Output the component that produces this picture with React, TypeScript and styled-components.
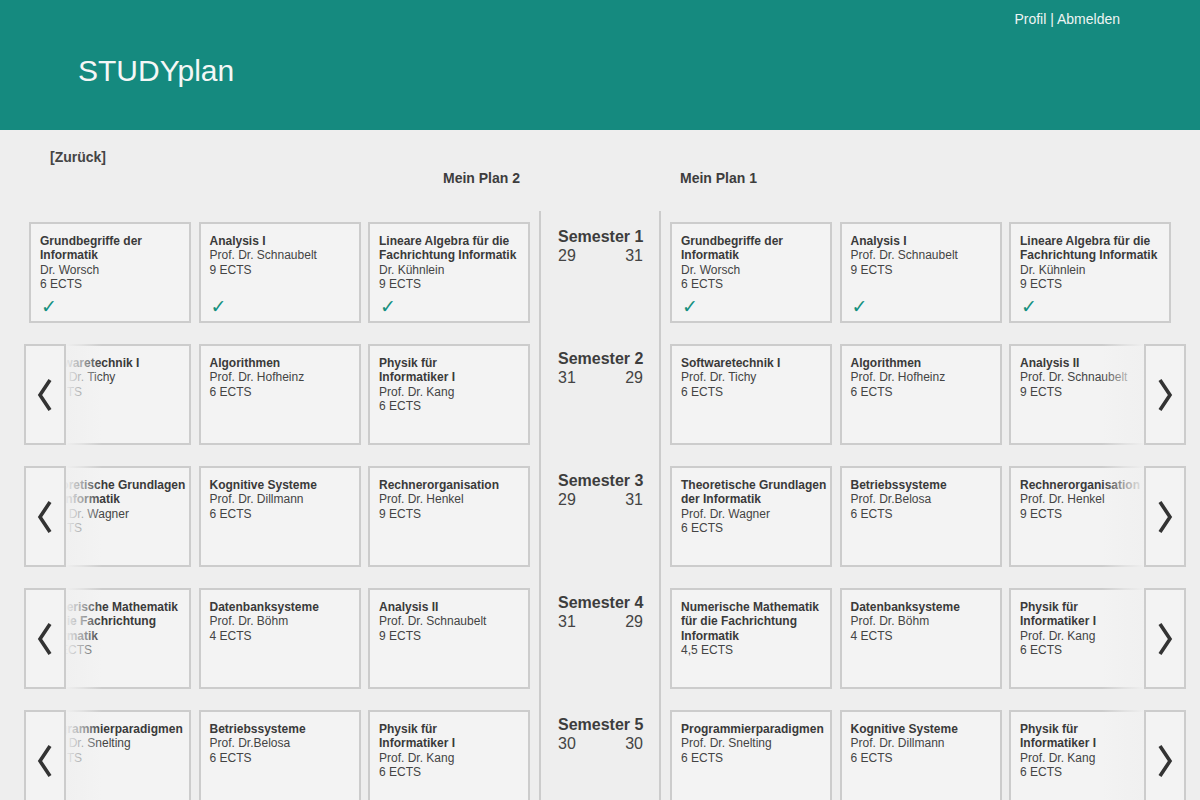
import React from "react";
import styled, { createGlobalStyle } from "styled-components";

const GlobalStyle = createGlobalStyle`
  html, body { margin: 0; padding: 0; background: #eeeeee; }
  body { font-family: "Liberation Sans", Arial, sans-serif; color: #3d3d3d; }
  * { box-sizing: border-box; }
`;

const Page = styled.div`
  width: 1200px;
  height: 800px;
  overflow: hidden;
  background: #eeeeee;
`;

const Header = styled.header`
  height: 130px;
  background: #158a7f;
  display: flex;
  flex-direction: column;
  padding: 11px 80px 0 78px;
`;

const TopLinks = styled.div`
  align-self: flex-end;
  font-size: 14px;
  line-height: 16px;
  color: #eef4f3;
`;

const Logo = styled.div`
  margin-top: 27px;
  font-size: 30px;
  line-height: 34px;
  color: #f4f7f6;
`;

const BackLink = styled.div`
  margin: 19px 0 0 50px;
  font-size: 14px;
  line-height: 16px;
  font-weight: bold;
  color: #444;
`;

const Grid = styled.div`
  display: grid;
  grid-template-columns: 539px 122px 1fr;
`;

const PlanHeads = styled(Grid)`
  margin-top: 5px;
  margin-bottom: 25px;
`;

const PlanTitle = styled.div<{ $side: "left" | "right" }>`
  font-size: 14px;
  line-height: 16px;
  font-weight: bold;
  color: #3d3d3d;
  text-align: ${(p) => (p.$side === "left" ? "right" : "left")};
  padding: ${(p) => (p.$side === "left" ? "0 19px 0 0" : "0 0 0 19px")};
`;

const PlanCell = styled.div<{ $side: "left" | "right" }>`
  position: relative;
  display: flex;
  gap: 7.5px;
  padding: 11px 0 10px;
  justify-content: ${(p) => (p.$side === "left" ? "flex-end" : "flex-start")};
  ${(p) => (p.$side === "left" ? "padding-right: 9px;" : "padding-left: 9px;")}
`;

const CenterCell = styled.div`
  border-left: 2px solid #cccccc;
  border-right: 2px solid #cccccc;
  padding: 17px 16px 0 17px;
`;

const SemTitle = styled.div`
  font-size: 16px;
  line-height: 18px;
  font-weight: bold;
  color: #3d3d3d;
  white-space: nowrap;
`;

const SemNums = styled.div`
  display: flex;
  justify-content: space-between;
  font-size: 16px;
  line-height: 19px;
  color: #444;
`;

const Card = styled.div`
  flex: 0 0 162px;
  width: 162px;
  height: 101px;
  border: 2px solid #cccccc;
  background: #f3f3f3;
  padding: 10px 0 5px 9px;
  display: flex;
  flex-direction: column;
  overflow: hidden;
  font-size: 12px;
  line-height: 14.4px;
`;

const Line = styled.span<{ $bold?: boolean }>`
  display: block;
  white-space: nowrap;
  font-weight: ${(p) => (p.$bold ? "bold" : "normal")};
  color: ${(p) => (p.$bold ? "#3a3a3a" : "#444")};
`;

const Check = styled.span`
  margin-top: auto;
  font-family: "DejaVu Sans", sans-serif;
  font-size: 19px;
  line-height: 20px;
  color: #14907f;
  padding-left: 1px;
`;

const Fader = styled.div<{ $side: "left" | "right" }>`
  position: absolute;
  top: 11px;
  height: 101px;
  display: flex;
  flex-direction: ${(p) => (p.$side === "left" ? "row" : "row-reverse")};
  ${(p) => (p.$side === "left" ? "left: 24px;" : "right: 14px;")}
  pointer-events: none;
`;

const ArrowButton = styled.div`
  width: 42px;
  height: 101px;
  border: 2px solid #cccccc;
  background: #f3f3f3;
  display: flex;
  align-items: center;
  justify-content: center;
  pointer-events: auto;
`;

const Fade = styled.div<{ $side: "left" | "right" }>`
  width: ${(p) => (p.$side === "left" ? "36px" : "42px")};
  height: 101px;
  background: linear-gradient(
    ${(p) => (p.$side === "left" ? "to right" : "to left")},
    rgba(240, 240, 240, 0.97) 0%,
    rgba(240, 240, 240, 0.6) 45%,
    rgba(240, 240, 240, 0) 100%
  );
`;

type Course = { title: string[]; prof?: string; ects: string; done?: boolean };

const C = (title: string[], prof: string | undefined, ects: string, done = false): Course => ({
  title,
  prof,
  ects,
  done,
});

const GBI = (d: boolean) => C(["Grundbegriffe der", "Informatik"], "Dr. Worsch", "6 ECTS", d);
const ANA1 = (d: boolean) => C(["Analysis I"], "Prof. Dr. Schnaubelt", "9 ECTS", d);
const LA = (d: boolean) => C(["Lineare Algebra für die", "Fachrichtung Informatik"], "Dr. Kühnlein", "9 ECTS", d);
const SWT = C(["Softwaretechnik I"], "Prof. Dr. Tichy", "6 ECTS");
const ALGO = C(["Algorithmen"], "Prof. Dr. Hofheinz", "6 ECTS");
const PHY = C(["Physik für", "Informatiker I"], "Prof. Dr. Kang", "6 ECTS");
const ANA2 = C(["Analysis II"], "Prof. Dr. Schnaubelt", "9 ECTS");
const TGI = C(["Theoretische Grundlagen", "der Informatik"], "Prof. Dr. Wagner", "6 ECTS");
const KOG = C(["Kognitive Systeme"], "Prof. Dr. Dillmann", "6 ECTS");
const RO = C(["Rechnerorganisation"], "Prof. Dr. Henkel", "9 ECTS");
const BS = C(["Betriebssysteme"], "Prof. Dr.Belosa", "6 ECTS");
const NUM = C(["Numerische Mathematik", "für die Fachrichtung", "Informatik"], undefined, "4,5 ECTS");
const DB = C(["Datenbanksysteme"], "Prof. Dr. Böhm", "4 ECTS");
const PP = C(["Programmierparadigmen"], "Prof. Dr. Snelting", "6 ECTS");

type Semester = {
  name: string;
  left: Course[];
  right: Course[];
  nums: [string, string];
  scroll: boolean;
};

const semesters: Semester[] = [
  { name: "Semester 1", left: [GBI(true), ANA1(true), LA(true)], right: [GBI(true), ANA1(true), LA(true)], nums: ["29", "31"], scroll: false },
  { name: "Semester 2", left: [SWT, ALGO, PHY], right: [SWT, ALGO, ANA2], nums: ["31", "29"], scroll: true },
  { name: "Semester 3", left: [TGI, KOG, RO], right: [TGI, BS, RO], nums: ["29", "31"], scroll: true },
  { name: "Semester 4", left: [NUM, DB, ANA2], right: [NUM, DB, PHY], nums: ["31", "29"], scroll: true },
  { name: "Semester 5", left: [PP, BS, PHY], right: [PP, KOG, PHY], nums: ["30", "30"], scroll: true },
];

const Chevron = ({ dir }: { dir: "left" | "right" }) => (
  <svg width="16" height="34" viewBox="0 0 16 34">
    <polyline
      points={dir === "left" ? "13,2 3,17 13,32" : "3,2 13,17 3,32"}
      fill="none"
      stroke="#333"
      strokeWidth="3.6"
      strokeLinejoin="miter"
    />
  </svg>
);

const CourseCard = ({ c }: { c: Course }) => (
  <Card>
    {c.title.map((t) => (
      <Line key={t} $bold>
        {t}
      </Line>
    ))}
    {c.prof && <Line>{c.prof}</Line>}
    <Line>{c.ects}</Line>
    {c.done && <Check>✓</Check>}
  </Card>
);

export default function App() {
  return (
    <Page>
      <GlobalStyle />
      <Header>
        <TopLinks>Profil | Abmelden</TopLinks>
        <Logo>STUDYplan</Logo>
      </Header>
      <BackLink>[Zurück]</BackLink>
      <PlanHeads>
        <PlanTitle $side="left">Mein Plan 2</PlanTitle>
        <div />
        <PlanTitle $side="right">Mein Plan 1</PlanTitle>
      </PlanHeads>
      {semesters.map((s) => (
        <Grid key={s.name}>
          <PlanCell $side="left">
            {s.left.map((c, i) => (
              <CourseCard key={i} c={c} />
            ))}
            {s.scroll && (
              <Fader $side="left">
                <ArrowButton>
                  <Chevron dir="left" />
                </ArrowButton>
                <Fade $side="left" />
              </Fader>
            )}
          </PlanCell>
          <CenterCell>
            <SemTitle>{s.name}</SemTitle>
            <SemNums>
              <span>{s.nums[0]}</span>
              <span>{s.nums[1]}</span>
            </SemNums>
          </CenterCell>
          <PlanCell $side="right">
            {s.right.map((c, i) => (
              <CourseCard key={i} c={c} />
            ))}
            {s.scroll && (
              <Fader $side="right">
                <ArrowButton>
                  <Chevron dir="right" />
                </ArrowButton>
                <Fade $side="right" />
              </Fader>
            )}
          </PlanCell>
        </Grid>
      ))}
    </Page>
  );
}
